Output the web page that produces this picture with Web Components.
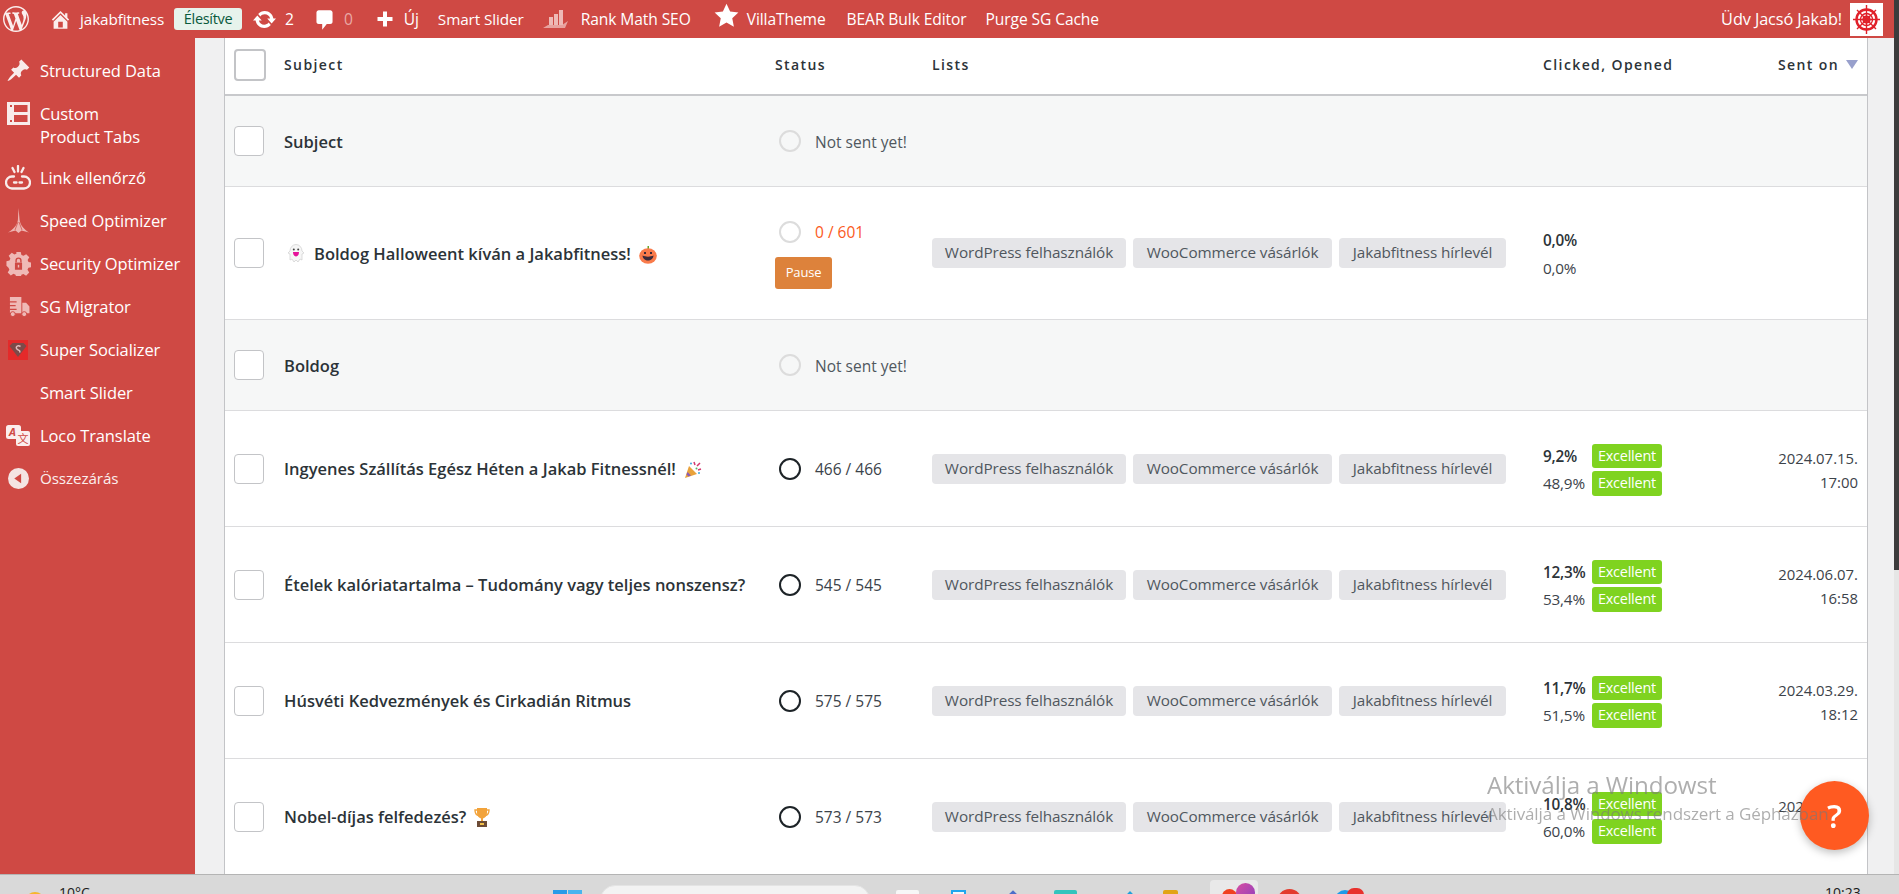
<!DOCTYPE html>
<html lang="hu">
<head>
<meta charset="utf-8">
<title>Campaigns</title>
<style>
  html, body { margin: 0; padding: 0; height: 894px; overflow: hidden; background: #f0f0f1; }
  body { font-family: "Open Sans", "Liberation Sans", sans-serif; color: #2c3338; }
</style>
</head>
<body>
<app-shell>
  <wp-admin-bar slot="bar"></wp-admin-bar>
  <wp-side-menu slot="side">
    <side-item icon="pin">Structured Data</side-item>
    <side-item icon="tabs" tall>Custom<br>Product Tabs</side-item>
    <side-item icon="link">Link ellenőrző</side-item>
    <side-item icon="rocket">Speed Optimizer</side-item>
    <side-item icon="lock">Security Optimizer</side-item>
    <side-item icon="truck">SG Migrator</side-item>
    <side-item icon="shield">Super Socializer</side-item>
    <side-item>Smart Slider</side-item>
    <side-item icon="loco">Loco Translate</side-item>
    <side-item icon="collapse" small>Összezárás</side-item>
  </wp-side-menu>
  <campaign-table slot="main">
    <table-head></table-head>

    <campaign-row style="--h:91px" draft>
      <span slot="subject">Subject</span>
      <status-cell slot="status" state="none">Not sent yet!</status-cell>
    </campaign-row>

    <campaign-row style="--h:133px">
      <span slot="subject"><emoji-icon name="ghost" before></emoji-icon>Boldog Halloweent kíván a Jakabfitness!<emoji-icon name="pumpkin"></emoji-icon></span>
      <status-cell slot="status" state="sending" pause>0 / 601</status-cell>
      <list-tags slot="lists"></list-tags>
      <rate-pair slot="rates" clicked="0,0%" opened="0,0%" plain></rate-pair>
    </campaign-row>

    <campaign-row style="--h:91px" draft>
      <span slot="subject">Boldog</span>
      <status-cell slot="status" state="none">Not sent yet!</status-cell>
    </campaign-row>

    <campaign-row style="--h:116px">
      <span slot="subject">Ingyenes Szállítás Egész Héten a Jakab Fitnessnél!<emoji-icon name="party"></emoji-icon></span>
      <status-cell slot="status" state="done">466 / 466</status-cell>
      <list-tags slot="lists"></list-tags>
      <rate-pair slot="rates" clicked="9,2%" opened="48,9%"></rate-pair>
      <span slot="date">2024.07.15.<br>17:00</span>
    </campaign-row>

    <campaign-row style="--h:116px">
      <span slot="subject">Ételek kalóriatartalma – Tudomány vagy teljes nonszensz?</span>
      <status-cell slot="status" state="done">545 / 545</status-cell>
      <list-tags slot="lists"></list-tags>
      <rate-pair slot="rates" clicked="12,3%" opened="53,4%"></rate-pair>
      <span slot="date">2024.06.07.<br>16:58</span>
    </campaign-row>

    <campaign-row style="--h:116px">
      <span slot="subject">Húsvéti Kedvezmények és Cirkadián Ritmus</span>
      <status-cell slot="status" state="done">575 / 575</status-cell>
      <list-tags slot="lists"></list-tags>
      <rate-pair slot="rates" clicked="11,7%" opened="51,5%"></rate-pair>
      <span slot="date">2024.03.29.<br>18:12</span>
    </campaign-row>

    <campaign-row style="--h:116px">
      <span slot="subject">Nobel-díjas felfedezés?<emoji-icon name="trophy"></emoji-icon></span>
      <status-cell slot="status" state="done">573 / 573</status-cell>
      <list-tags slot="lists"></list-tags>
      <rate-pair slot="rates" clicked="10,8%" opened="60,0%"></rate-pair>
      <span slot="date">2024.03.01.<br>17:30</span>
    </campaign-row>
  </campaign-table>
  <win-taskbar slot="taskbar"></win-taskbar>
</app-shell>
<help-fab></help-fab>
<win-watermark></win-watermark>

<script>
const dash = {
  wp: 'M20 10c0-5.51-4.49-10-10-10C4.48 0 0 4.49 0 10c0 5.52 4.48 10 10 10 5.51 0 10-4.48 10-10zM7.78 15.37L4.37 6.22c.55-.02 1.17-.08 1.17-.08.5-.06.44-1.13-.06-1.11 0 0-1.45.11-2.37.11-.18 0-.37 0-.58-.01C4.12 2.69 6.87 1.11 10 1.11c2.33 0 4.45.87 6.05 2.34-.68-.11-1.65.39-1.65 1.58 0 .74.45 1.36.9 2.1.35.61.55 1.36.55 2.46 0 1.49-1.4 5-1.4 5l-3.03-8.37c.54-.02.82-.17.82-.17.5-.05.44-1.25-.06-1.22 0 0-1.44.12-2.38.12-.87 0-2.33-.12-2.33-.12-.5-.03-.56 1.2-.06 1.22l.92.08 1.26 3.41zM17.41 10c.24-.64.74-1.87.43-4.25.7 1.29 1.05 2.71 1.05 4.25 0 3.29-1.73 6.24-4.4 7.78.97-2.59 1.94-5.2 2.92-7.78zM6.1 18.09C3.12 16.65 1.11 13.53 1.11 10c0-1.3.23-2.48.72-3.59C3.25 10.3 4.67 14.2 6.1 18.09zm4.03-6.63l2.58 6.98c-.86.29-1.76.45-2.71.45-.79 0-1.57-.11-2.29-.33.81-2.38 1.62-4.74 2.42-7.1z',
  home: 'M16 8.5l1.53 1.53-1.06 1.06L10 4.62l-6.47 6.47-1.06-1.06L10 2.5l4 4v-2h2v4zm-6-2.46l6 5.99V18H4v-5.97zM12 17v-5H8v5h4z',
  update: 'M10.2 3.28c3.53 0 6.43 2.61 6.92 6h2.08l-3.5 4-3.5-4h2.32c-.45-1.97-2.21-3.45-4.32-3.45-1.45 0-2.73.71-3.54 1.78L4.95 5.66C6.23 4.2 8.11 3.28 10.2 3.28zm-.4 13.44c-3.52 0-6.43-2.61-6.92-6H.8l3.5-4c1.17 1.33 2.33 2.67 3.5 4H5.48c.45 1.97 2.21 3.45 4.32 3.45 1.45 0 2.73-.71 3.54-1.78l1.71 1.95c-1.28 1.46-3.15 2.38-5.25 2.38z',
  comment: 'M5 2h10c1.1 0 2 .9 2 2v8c0 1.1-.9 2-2 2h-3l-4 5v-5H5c-1.1 0-2-.9-2-2V4c0-1.1.9-2 2-2z',
  plus: 'M17.5 8v4H12v5.5H8V12H2.5V8H8V2.5h4V8z',
  star: 'M10 .5l2.9 6.3 6.6.8-4.9 4.6 1.3 6.8-5.9-3.4L4.1 19l1.3-6.8L.5 7.6l6.6-.8z',
  pin: 'M10.44 3.02l1.82-1.82 6.36 6.35-1.83 1.82c-1.05-.68-2.48-.57-3.41.36l-.75.75c-.92.93-1.04 2.35-.35 3.41l-1.83 1.82-2.41-2.41-2.8 2.79c-.42.42-3.38 2.71-3.8 2.29s1.86-3.39 2.28-3.81l2.79-2.79L4.1 9.36l1.83-1.82c1.05.69 2.48.57 3.4-.36l.75-.75c.93-.92 1.05-2.35.36-3.41z'
};
const dashSvg = (name, size, fill) =>
  `<svg width="${size}" height="${size}" viewBox="0 0 20 20" fill="${fill || '#fff'}"><path fill-rule="evenodd" d="${dash[name]}"/></svg>`;

const sideIcons = {
  pin: dashSvg('pin', 25, '#f8eceb'),
  tabs: `<svg width="23" height="23" viewBox="0 0 23 23"><path fill="#f8eceb" fill-rule="evenodd" d="M0 0h23v23H0zM3 3v2h2V3zM7 3v7h13.500V3zM7 13v7h13.500v-7zM3 18v2h2v-2z"/></svg>`,
  link: `<svg width="26" height="25" viewBox="0 0 26 25" fill="none" stroke="#f8eceb" stroke-width="2.300" stroke-linecap="round"><path d="M9 11.500H7a6 6 0 0 0 0 12H19a6 6 0 0 0 0-12H17M9 17.500h2.500M14.500 17.500H17M7.500 3l2 4M13 1v5.500M18.500 3l-2 4"/></svg>`,
  rocket: `<svg width="21" height="25" viewBox="0 0 21 25" fill="#eeb5b2"><path d="M10.500 0l1.100 12c.7 5 4 9 9.400 12.500l-7.500-2-3 2.500-3-2.500-7.500 2C5.900 21 9.200 17 9.900 12z"/><path d="M10 14l-3 8M11 14l3 8" stroke="#cf4944" stroke-width=".7"/></svg>`,
  lock: `<svg width="25" height="25" viewBox="-1 -1 28 28"><path fill="#efb9b6" d="M10.500 0h5l.8 3.400 2.300 1 3-1.900 3.500 3.500-1.900 3 1 2.300 3.300.7v5l-3.400.8-1 2.300 1.900 3-3.500 3.500-3-1.900-2.300 1-.7 3.300h-5l-.8-3.400-2.300-1-3 1.900-3.500-3.500 1.900-3-1-2.300L-.5 15.500v-5l3.400-.8 1-2.300-1.900-3 3.500-3.500 3 1.900 2.300-1z"/><path fill="#cf4944" d="M9 12h8v8H9z"/><path fill="none" stroke="#cf4944" stroke-width="1.600" d="M10.300 12V9.700a2.700 2.700 0 0 1 5.400 0V12"/><path fill="#efb9b6" d="M12.200 14.500h1.600v3h-1.600z"/></svg>`,
  truck: `<svg width="23" height="20" viewBox="0 0 24 21" fill="#efb9b6"><path d="M3 0h12v17H3zM16 6h4l3.500 4v7H16z"/><circle cx="6" cy="18" r="2.600" stroke="#cf4944"/><circle cx="18" cy="18" r="2.600" stroke="#cf4944"/><path d="M2 5h8M1 9h8M3 13h7" stroke="#cf4944" stroke-width="1.300"/></svg>`,
  shield: `<svg width="20" height="20" viewBox="0 0 20 20"><path fill="#e42a2a" d="M0 0h20v20H0z"/><path fill="#7c4a49" d="M1.500 6l3-3h11l3 3L10 17z"/><path fill="none" stroke="#e2bcbc" stroke-width="1.500" d="M12.500 6.500C10 5 7.500 6.500 8.500 8.500S13 10 11.500 12.500"/></svg>`,
  loco: `<svg width="24" height="21" viewBox="0 0 24 21"><rect x="0" y="0" width="15" height="14" rx="2.500" fill="#fbeeed"/><text x="6.500" y="11" font-size="11" font-style="italic" font-weight="700" text-anchor="middle" fill="#cf4944" font-family="Open Sans">A</text><rect x="10" y="6" width="14" height="15" rx="2" fill="#fbeeed"/><text x="17" y="18" font-size="11" text-anchor="middle" fill="#cf4944" font-family="Noto Sans CJK SC">文</text></svg>`,
  collapse: `<svg width="21" height="21" viewBox="0 0 20 20"><circle cx="10" cy="10" r="10" fill="#f4e4e3"/><path fill="#cf4944" d="M12.500 5.500v9L6 10z"/></svg>`
};

const emojis = {
  ghost: `<svg width="18" height="21" viewBox="0 0 18 21"><path fill="#f6f6f6" stroke="#cfcfcf" stroke-width=".7" d="M3 8a6 6.500 0 0 1 12 0l2 2-2 1v6l-2-1-2 3-2-2-2 2-2-3-2 1v-6l-2-1z"/><circle cx="6.800" cy="6.500" r="1" fill="#444"/><circle cx="11.200" cy="6.500" r="1" fill="#444"/><path fill="#e6129a" d="M6 9h6c0 3-1.500 4.500-3 4.500S6 12 6 9z"/></svg>`,
  pumpkin: `<svg width="18" height="18" viewBox="0 0 18 18"><path fill="#6aa52a" d="M8.500 0h1.500v3H8.500z"/><ellipse cx="9" cy="10" rx="8.800" ry="7.800" fill="#f97b4b"/><path fill="#3a2a3a" d="M3.500 9.500c3 1.500 8 1.500 11 0-.3 3.500-2.800 5-5.500 5s-5.200-1.500-5.500-5zM5 6h2v2H5zM11 6h2v2h-2z"/></svg>`,
  party: `<svg width="18" height="18" viewBox="0 0 18 18"><path fill="#e9a23b" d="M1 17l4-12 8 8z"/><path fill="#8a5bb5" d="M3.500 11l3.500 3.500-2.500 1-2-2z"/><path d="M10 1l1 3M16 2l-3 3M17 8l-3 1" stroke="#d3366e" stroke-width="1.500"/><circle cx="7" cy="2.500" r="1" fill="#3ca7dc"/><circle cx="15" cy="12" r="1" fill="#3ca7dc"/><circle cx="12.500" cy="7.500" r="1" fill="#58b368"/></svg>`,
  trophy: `<svg width="16" height="19" viewBox="0 0 16 19"><path fill="none" stroke="#f2a33a" stroke-width="1.400" d="M3.500 2H1c0 3.500 1.200 5 3.500 5.500M12.500 2H15c0 3.500-1.200 5-3.500 5.500"/><path fill="#f2a33a" d="M3 0h10v5c0 3-2 5-4 5.500V13H7v-2.500C5 10 3 8 3 5z"/><path fill="#6d4c36" d="M3 13h10v6H3z"/><path fill="#f2c14a" d="M6 15h4v2H6z"/></svg>`
};

class AppShell extends HTMLElement {
  constructor() {
    super();
    this.attachShadow({ mode: 'open' }).innerHTML = `
      <style>
        :host { display: grid; width: 1899px; height: 894px; overflow: hidden;
          grid-template-columns: 195px 1699px 5px; grid-template-rows: 38px 836px 20px; background: #f0f0f1; }
        .bar { grid-column: 1 / 3; grid-row: 1; }
        .side { grid-column: 1; grid-row: 2; }
        .main { grid-column: 2; grid-row: 2; padding: 0 26px 0 29px; overflow: hidden; }
        .scroll { grid-column: 3; grid-row: 1 / 3; background: linear-gradient(#3c3c3c 0 570px, #e6e6e6 570px); }
        .task { grid-column: 1 / 4; grid-row: 3; }
      </style>
      <div class="bar"><slot name="bar"></slot></div>
      <div class="side"><slot name="side"></slot></div>
      <div class="main"><slot name="main"></slot></div>
      <div class="scroll"></div>
      <div class="task"><slot name="taskbar"></slot></div>`;
  }
}

class WpAdminBar extends HTMLElement {
  constructor() {
    super();
    this.attachShadow({ mode: 'open' }).innerHTML = `
      <style>
        :host { display: flex; align-items: center; height: 38px; background: #cf4944; color: #fff;
          font-size: 15.600px; white-space: nowrap; letter-spacing: -.1px; }
        svg { display: block; flex: none; }
        span { flex: none; }
        .badge { background: #e7f3ec; color: #0a5a3c; border-radius: 3px; height: 22px; line-height: 21px;
          width: 68px; text-align: center; font-size: 14.500px; letter-spacing: -.3px; }
        .dim { color: #e9a8a5; }
        .narrow { font-size: 15.300px; }
        .right { margin-left: auto; margin-right: 11px; display: flex; align-items: center; font-size: 16.300px; }
        .avatar { width: 33px; height: 33px; background: #fff; margin-left: 8px; display: flex; align-items: center; justify-content: center; }
      </style>
      <span style="margin-left:3px">${dashSvg('wp', 26, '#fbeeed')}</span>
      <span style="margin-left:20px">${dashSvg('home', 23, '#fbeeed')}</span>
      <span class="narrow" style="margin-left:8px">jakabfitness</span>
      <span class="badge" style="margin-left:10px">Élesítve</span>
      <span style="margin-left:10px">${dashSvg('update', 25)}</span>
      <span style="margin-left:8px">2</span>
      <span style="margin-left:19px">${dashSvg('comment', 23)}</span>
      <span class="dim" style="margin-left:8px">0</span>
      <span style="margin-left:22px">${dashSvg('plus', 20)}</span>
      <span style="margin-left:9px">Új</span>
      <span class="narrow" style="margin-left:19px">Smart Slider</span>
      <span style="margin-left:19px">
        <svg width="26" height="20" viewBox="0 0 26 20" fill="#eeb9b6"><path d="M6 8h4v8H6zM11 5h4v11h-4zM16 1h4v15h-4z"/><path d="M0 19l5-3h14l6-4-3 7z" opacity=".8"/></svg>
      </span>
      <span style="margin-left:12px">Rank Math SEO</span>
      <span style="margin-left:23px;margin-top:-8px">${dashSvg('star', 25)}</span>
      <span style="margin-left:8px">VillaTheme</span>
      <span style="margin-left:21px">BEAR Bulk Editor</span>
      <span style="margin-left:19px">Purge SG Cache</span>
      <div class="right">
        <span>Üdv Jacsó Jakab!</span>
        <span class="avatar">
          <svg width="29" height="31" viewBox="0 0 29 31" fill="none" stroke="#e0202a">
            <circle cx="14.500" cy="15.500" r="10" stroke-width="2.400"/>
            <circle cx="14.500" cy="15.500" r="6" stroke-width="1.300"/>
            <circle cx="14.500" cy="15.500" r="3" stroke-width="2.200"/>
            <path stroke-width="1.400" d="M14.500 1v29M1 15.500h27M5 6l19 19M24 6L5 25"/>
          </svg>
        </span>
      </div>`;
  }
}

class WpSideMenu extends HTMLElement {
  constructor() {
    super();
    this.attachShadow({ mode: 'open' }).innerHTML = `
      <style>
        :host { display: block; height: 100%; background: #cf4944; padding-top: 11px; box-sizing: border-box; }
      </style>
      <slot></slot>`;
  }
}

class SideItem extends HTMLElement {
  connectedCallback() {
    const icon = sideIcons[this.getAttribute('icon')] || '';
    this.attachShadow({ mode: 'open' }).innerHTML = `
      <style>
        :host { display: flex; align-items: center; height: 43px; color: #fff; font-size: 16.500px; line-height: 23px; letter-spacing: -.1px; white-space: nowrap; }
        :host([tall]) { height: 64px; align-items: flex-start; padding-top: 10px; box-sizing: border-box; }
        :host([small]) { font-size: 15.200px; color: #fbeeed; }
        .i { width: 40px; flex: none; display: flex; justify-content: center; padding-right: 4px; box-sizing: border-box; }
      </style>
      <div class="i">${icon}</div><div><slot></slot></div>`;
  }
}

class CampaignTable extends HTMLElement {
  constructor() {
    super();
    this.attachShadow({ mode: 'open' }).innerHTML = `
      <style>
        :host { display: block; background: #fff; border: solid #c3c4c7; border-width: 0 1px; height: 100%; box-sizing: border-box; overflow: hidden; }
      </style>
      <slot></slot>`;
  }
}

const rowColumns = '50px 491px 157px 611px 1fr';

class TableHead extends HTMLElement {
  constructor() {
    super();
    this.attachShadow({ mode: 'open' }).innerHTML = `
      <style>
        :host { display: grid; grid-template-columns: ${rowColumns}; align-items: center; height: 58px; box-sizing: border-box;
          border-bottom: 2px solid #c8c9cc; padding: 0 9px 3px 9px; font-size: 14px; font-weight: 600; letter-spacing: 1.400px; color: #2c3338; }
        .cb { width: 28px; height: 28px; border: 2px solid #c3c4c7; border-radius: 4px; background: #fff; }
        .sent { display: flex; justify-content: flex-end; align-items: center; gap: 7px; }
        .tri { width: 0; height: 0; border: 6.500px solid transparent; border-top: 9px solid #98a0cc; border-bottom: 0; }
      </style>
      <div class="cb"></div><div>Subject</div><div>Status</div><div>Lists</div>
      <div style="display:flex;justify-content:space-between"><span>Clicked, Opened</span>
      <span class="sent">Sent on <i class="tri"></i></span></div>`;
  }
}

class CampaignRow extends HTMLElement {
  constructor() {
    super();
    this.attachShadow({ mode: 'open' }).innerHTML = `
      <style>
        :host { display: grid; grid-template-columns: ${rowColumns}; align-items: center; height: var(--h); box-sizing: border-box;
          border-bottom: 1px solid #dcdcde; padding: 0 9px; background: #fff; }
        :host([draft]) { background: #f6f7f7; }
        .cb { width: 28px; height: 28px; border: 1px solid #c3c4c7; border-radius: 4px; background: #fff; }
        .subject { font-size: 16.500px; font-weight: 600; color: #2c3338; white-space: nowrap; }
        .date { font-size: 14.900px; line-height: 24px; text-align: right; color: #3c434a; margin-top: 2px; }
        .last { display: flex; justify-content: space-between; align-items: center; }
      </style>
      <div class="cb"></div>
      <div class="subject"><slot name="subject"></slot></div>
      <div><slot name="status"></slot></div>
      <div><slot name="lists"></slot></div>
      <div class="last"><slot name="rates"></slot><div class="date"><slot name="date"></slot></div></div>`;
  }
}

class StatusCell extends HTMLElement {
  connectedCallback() {
    const pause = this.hasAttribute('pause') ? '<div class="pause">Pause</div>' : '';
    this.attachShadow({ mode: 'open' }).innerHTML = `
      <style>
        :host { display: block; font-size: 15.500px; color: #50575e; }
        .line { display: flex; align-items: center; padding-left: 4px; }
        .line span { padding-top: 1px; }
        .dot { width: 22px; height: 22px; border-radius: 50%; border: 2.500px solid #dcdcdc; box-sizing: border-box; margin-right: 14px; flex: none; }
        :host([state=done]) .dot { border-color: #1d2327; }
        :host([state=done]) { color: #3c434a; }
        :host([state=sending]) { color: #fb5a22; margin-top: 3px; }
        .pause { margin-top: 14px; width: 57px; height: 32px; line-height: 31px; text-align: center; background: #dd823b; color: #fff; border-radius: 3px; font-size: 13px; letter-spacing: -.2px; }
      </style>
      <div class="line"><div class="dot"></div><span><slot></slot></span></div>${pause}`;
  }
}

class ListTags extends HTMLElement {
  constructor() {
    super();
    this.attachShadow({ mode: 'open' }).innerHTML = `
      <style>
        :host { display: flex; gap: 7px; }
        span { height: 30px; line-height: 29px; background: #e5e5e8; border-radius: 4px; text-align: center; white-space: nowrap;
          font-size: 15.300px; color: #50575e; letter-spacing: -.1px; }
      </style>
      <span style="width:194px">WordPress felhasználók</span>
      <span style="width:199px">WooCommerce vásárlók</span>
      <span style="width:167px">Jakabfitness hírlevél</span>`;
  }
}

class RatePair extends HTMLElement {
  connectedCallback() {
    const plain = this.hasAttribute('plain');
    const badge = plain ? '' : '<b>Excellent</b>';
    this.attachShadow({ mode: 'open' }).innerHTML = `
      <style>
        :host { display: grid; grid-template-columns: 49px auto; font-size: 15.300px; color: #3c434a; letter-spacing: -.2px; align-items: center; margin-top: 2px; }
        .a { font-weight: 600; color: #2c3338; height: 27px; display: flex; align-items: center; }
        .o { height: 28px; display: flex; align-items: center; }
        b { font-weight: 400; background: #7fd320; color: #fff; width: 70px; text-align: center; border-radius: 3px; font-size: 14.400px; }
        .r1 b { height: 24px; line-height: 23px; }
        .r2 b { height: 25px; line-height: 24px; }
        .r1, .r2 { display: flex; align-items: center; }
      </style>
      <div class="a">${this.getAttribute('clicked')}</div><div class="r1">${badge}</div>
      <div class="o">${this.getAttribute('opened')}</div><div class="r2">${badge}</div>`;
  }
}

class EmojiIcon extends HTMLElement {
  connectedCallback() {
    this.attachShadow({ mode: 'open' }).innerHTML = `
      <style>
        :host { display: inline-block; vertical-align: -4px; margin: -4px 0 -4px 8px; line-height: 0; }
        :host([before]) { margin: -4px 9px -4px 3px; }
      </style>${emojis[this.getAttribute('name')]}`;
  }
}

class WinTaskbar extends HTMLElement {
  constructor() {
    super();
    this.attachShadow({ mode: 'open' }).innerHTML = `
      <style>
        :host { display: flex; height: 20px; box-sizing: border-box; background: #d9d9d9; border-top: 1px solid #b4b4b4;
          overflow: hidden; font: 14px "Open Sans", sans-serif; color: #1b1b1b; align-items: flex-start; }
        i { display: block; flex: none; }
      </style>
      <i style="margin:17px 0 0 25px;width:20px;height:20px;border-radius:50%;background:#f6b62c"></i>
      <span style="margin:8px 0 0 14px;flex:none;width:30px">10°C</span>
      <i style="margin:15px 0 0 464px;width:29px;height:29px;background:linear-gradient(90deg,#2a9be8 0 47%,transparent 47% 53%,#49b4ef 53%)"></i>
      <i style="margin:10px 0 0 18px;width:270px;height:30px;border-radius:15px;background:#f3f3f3;border:1px solid #e4e4e4;box-sizing:border-box"></i>
      <i style="margin:15px 0 0 26px;width:23px;height:23px;background:#f7f7f7;border-radius:2px"></i>
      <i style="margin:15px 0 0 32px;width:15px;height:15px;border:2px solid #22a7ee;box-sizing:border-box;background:#f4f7fa"></i>
      <i style="margin:15px 0 0 34px;width:26px;height:26px;background:#4d6ec9;transform:rotate(45deg) scale(.7)"></i>
      <i style="margin:15px 0 0 28px;width:23px;height:23px;background:#34c4bd;border-radius:2px"></i>
      <i style="margin:16px 0 0 43px;width:20px;height:20px;background:#1f9fdb;transform:rotate(45deg) scale(.7)"></i>
      <i style="margin:15px 0 0 23px;width:15px;height:20px;background:#e2a417;border-radius:2px 2px 0 0"></i>
      <div style="margin:5px 0 0 32px;width:48px;height:20px;background:#e9e9e9;border-radius:4px 4px 0 0;flex:none;display:flex;align-items:flex-start">
        <i style="margin:9px 0 0 12px;width:15px;height:15px;border-radius:50%;background:#f0401f"></i>
        <i style="margin:3px 0 0 -1px;width:19px;height:19px;border-radius:50%;background:linear-gradient(135deg,#d84ea0,#8d3fc0)"></i>
      </div>
      <i style="margin:14px 0 0 19px;width:25px;height:25px;border-radius:50%;background:#e33b2e"></i>
      <i style="margin:15px 0 0 33px;width:20px;height:20px;border-radius:50%;background:#1f9be8"></i>
      <i style="margin:13px 0 0 -8px;width:17px;height:14px;border-radius:7px;background:#e8312d"></i>
      <span style="margin:8px 0 0 461px;flex:none">10:23</span>`;
  }
}

class HelpFab extends HTMLElement {
  constructor() {
    super();
    this.attachShadow({ mode: 'open' }).innerHTML = `
      <style>
        :host { position: fixed; left: 1800px; top: 781px; width: 69px; height: 69px; border-radius: 50%;
          background: #ff5a21; box-shadow: 0 3px 8px rgba(0,0,0,.25); color: #fff; display: flex; align-items: center; justify-content: center;
          font: 600 33px "Open Sans", sans-serif; }
      </style>?`;
  }
}

class WinWatermark extends HTMLElement {
  constructor() {
    super();
    this.attachShadow({ mode: 'open' }).innerHTML = `
      <style>
        :host { position: fixed; left: 1487px; top: 769px; color: rgba(120,120,120,.6); font-family: "Open Sans", sans-serif; white-space: nowrap; pointer-events: none; }
        .a { font-size: 24.200px; line-height: 32px; letter-spacing: -.1px; }
        .b { font-size: 17px; line-height: 20px; margin-top: 3px; letter-spacing: -.1px; }
      </style>
      <div class="a">Aktiválja a Windowst</div>
      <div class="b">Aktiválja a Windows rendszert a Gépházban</div>`;
  }
}

customElements.define('app-shell', AppShell);
customElements.define('wp-admin-bar', WpAdminBar);
customElements.define('wp-side-menu', WpSideMenu);
customElements.define('side-item', SideItem);
customElements.define('campaign-table', CampaignTable);
customElements.define('table-head', TableHead);
customElements.define('campaign-row', CampaignRow);
customElements.define('status-cell', StatusCell);
customElements.define('list-tags', ListTags);
customElements.define('rate-pair', RatePair);
customElements.define('emoji-icon', EmojiIcon);
customElements.define('win-taskbar', WinTaskbar);
customElements.define('help-fab', HelpFab);
customElements.define('win-watermark', WinWatermark);
</script>
</body>
</html>
